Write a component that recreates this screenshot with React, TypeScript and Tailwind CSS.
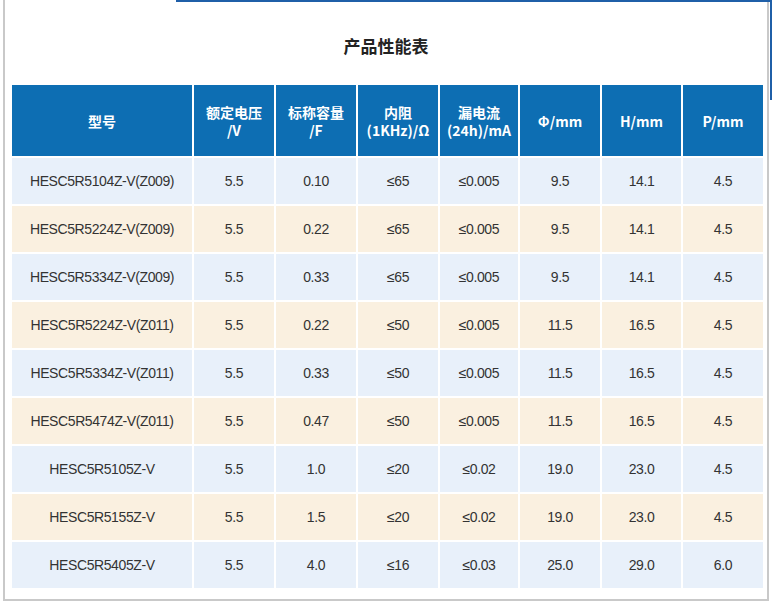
import React from "react";

const rows = [
  ["HESC5R5104Z-V(Z009)", "5.5", "0.10", "≤65", "≤0.005", "9.5", "14.1", "4.5"],
  ["HESC5R5224Z-V(Z009)", "5.5", "0.22", "≤65", "≤0.005", "9.5", "14.1", "4.5"],
  ["HESC5R5334Z-V(Z009)", "5.5", "0.33", "≤65", "≤0.005", "9.5", "14.1", "4.5"],
  ["HESC5R5224Z-V(Z011)", "5.5", "0.22", "≤50", "≤0.005", "11.5", "16.5", "4.5"],
  ["HESC5R5334Z-V(Z011)", "5.5", "0.33", "≤50", "≤0.005", "11.5", "16.5", "4.5"],
  ["HESC5R5474Z-V(Z011)", "5.5", "0.47", "≤50", "≤0.005", "11.5", "16.5", "4.5"],
  ["HESC5R5105Z-V", "5.5", "1.0", "≤20", "≤0.02", "19.0", "23.0", "4.5"],
  ["HESC5R5155Z-V", "5.5", "1.5", "≤20", "≤0.02", "19.0", "23.0", "4.5"],
  ["HESC5R5405Z-V", "5.5", "4.0", "≤16", "≤0.03", "25.0", "29.0", "6.0"],
];

const headers: string[][] = [
  ["型号"],
  ["额定电压", "/V"],
  ["标称容量", "/F"],
  ["内阻", "(1KHz)/Ω"],
  ["漏电流", "(24h)/mA"],
  ["Φ/mm"],
  ["H/mm"],
  ["P/mm"],
];

export default function App() {
  return (
    <div className="relative w-[772px] h-[606px] bg-white overflow-hidden" style={{ fontFamily: '"Liberation Sans", "Noto Sans CJK SC", sans-serif' }}>
      <div className="absolute left-[176px] top-0 w-[596px] h-[2px] bg-[#1f5fa8]" />
      <div className="absolute right-0 top-0 w-[2px] h-[100px] bg-[#1f5fa8]" />
      <div className="ml-[3px] w-[766px] h-[601px] border-x-2 border-b-2 border-[#c9c9c9] pt-[29px] pl-[7px]">
        <div className="text-center text-[17px] font-bold text-[#222] h-[34px] leading-[34px] -ml-[7px]" style={{ fontFamily: '"Noto Sans CJK SC", sans-serif' }}>产品性能表</div>
        <div className="mt-[22px] grid grid-cols-[180px_80px_80px_80px_78px_80px_79px_80px] gap-[2px] w-[750px]">
          {headers.map((h, i) => (
            <div key={i} className="h-[71px] bg-[#0d6eb3] text-white font-bold text-[14px] leading-[18px] flex flex-col items-center justify-center" style={{ fontFamily: '"Noto Sans CJK SC", sans-serif' }}>
              {h.map((t, j) => <div key={j} className="whitespace-nowrap">{t}</div>)}
            </div>
          ))}
          {rows.map((r, ri) =>
            r.map((c, ci) => (
              <div key={ri + "-" + ci} className={`h-[46px] flex items-center justify-center text-[14px] text-[#333] tracking-[-0.4px] ${ri % 2 === 0 ? "bg-[#e8f0fa]" : "bg-[#faf0e0]"}`}>
                {c}
              </div>
            ))
          )}
        </div>
      </div>
    </div>
  );
}
